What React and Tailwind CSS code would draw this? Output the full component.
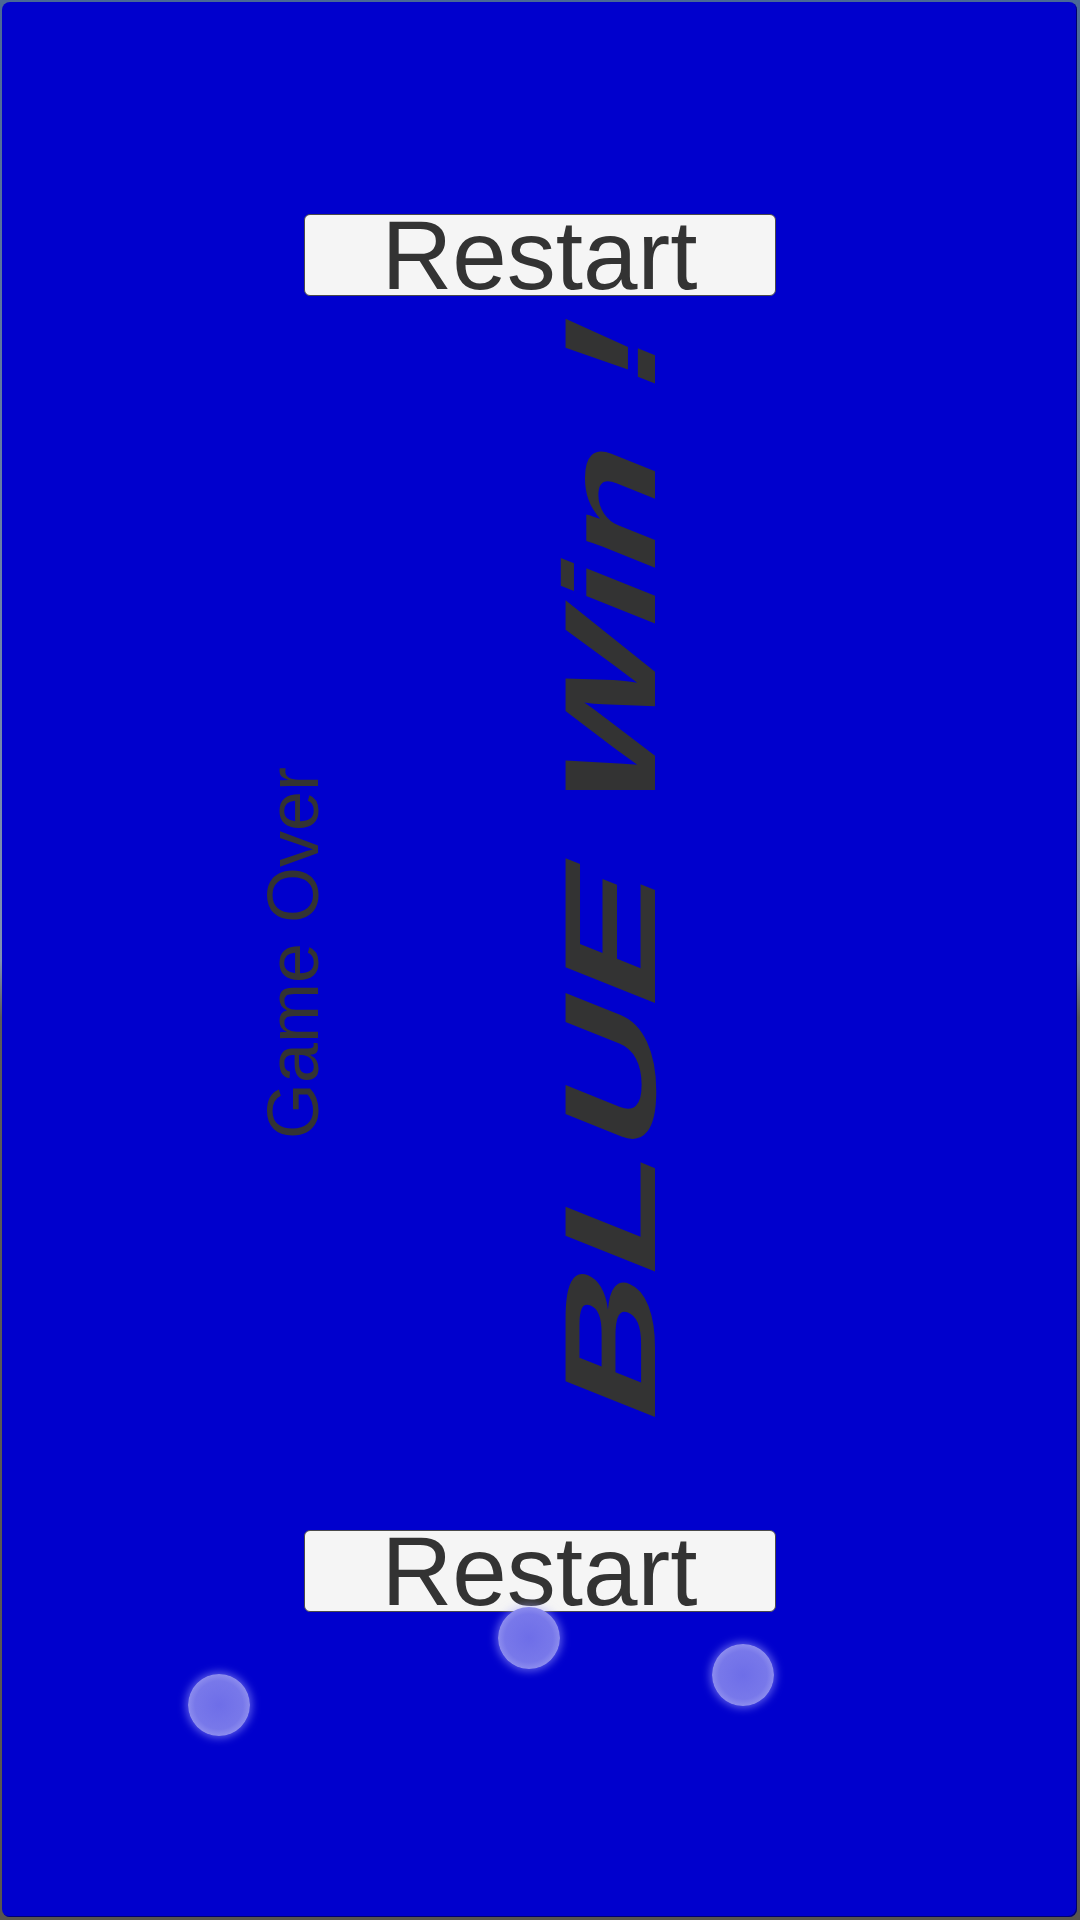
const circles = [
  { id: 1, className: "left-[186px] top-[1672px]" },
  { id: 2, className: "left-[496px] top-[1605px]" },
  { id: 3, className: "left-[710px] top-[1642px]" },
];

function RestartButton() {
  return (
    <button className="mx-auto flex h-[82px] w-[472px] items-center justify-center overflow-visible rounded-[6px] border border-[#4a4a4a] bg-[#f5f5f5]">
      <span className="whitespace-nowrap text-[98px] leading-none text-[#333333]">
        Restart
      </span>
    </button>
  );
}

export default function App() {
  return (
    <div className="flex h-[1920px] w-[1080px] bg-[linear-gradient(to_bottom,#4a6896_0%,#7f90b2_50%,#5a5a5a_53%,#58554f_100%)] pb-[3px] pl-[2px] pr-[3px] pt-[2px] font-['Liberation_Sans',Arial,sans-serif]">
      <div className="relative flex flex-1 flex-col overflow-hidden rounded-[8px] bg-[#0000cd] pt-[212px] shadow-[inset_-1px_-1px_0_rgba(0,0,70,0.7)]">
        <RestartButton />

        <div className="flex h-[1234px] items-start">
          <div className="ml-[291px] mt-[657px] flex h-0 w-0 items-center justify-center">
            <span className="-rotate-90 whitespace-nowrap text-[72px] leading-none text-[#333333]">
              Game Over
            </span>
          </div>
          <div className="ml-[317px] mt-[569px] flex h-0 w-0 items-center justify-center">
            <span className="whitespace-nowrap text-[130px] font-bold leading-none text-[#333333] [transform:rotate(-90deg)_skewX(-21.8deg)_scaleX(1.55)]">
              BLUE Win !
            </span>
          </div>
        </div>

        <RestartButton />

        {circles.map((c) => (
          <div
            key={c.id}
            className={`absolute h-[62px] w-[62px] rounded-full bg-[radial-gradient(circle,#6e6ee8_0%,#7878ea_55%,#9c9cf2_82%,rgba(170,170,248,0.5)_95%,rgba(170,170,248,0)_100%)] shadow-[0_0_8px_2px_rgba(170,170,255,0.55)] ${c.className}`}
          />
        ))}
      </div>
    </div>
  );
}
